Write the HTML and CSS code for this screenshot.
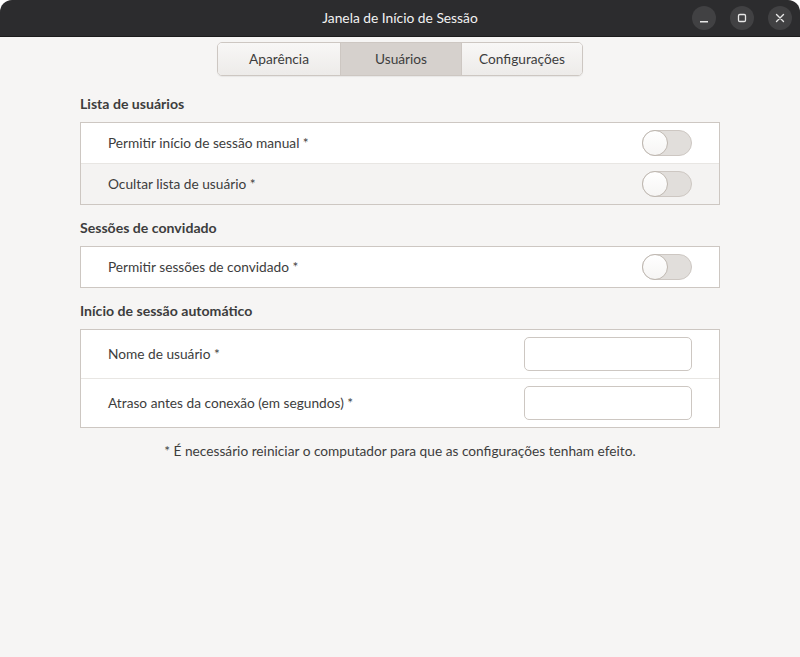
FILE: index.html
```html
<!DOCTYPE html>
<html lang="pt-BR">
<head>
<meta charset="utf-8">
<title>Janela de Início de Sessão</title>
<link rel="stylesheet" href="styles.css">
</head>
<body>
<div class="window">
  <header class="titlebar">
    <div class="title">Janela de Início de Sessão</div>
    <div class="controls">
      <span class="ctl"><svg width="24" height="24" viewBox="0 0 24 24"><rect x="8" y="15" width="8" height="1.5" fill="#e6e6e6"/></svg></span>
      <span class="ctl"><svg width="24" height="24" viewBox="0 0 24 24"><rect x="8.5" y="8.5" width="7" height="7" rx="1.3" fill="none" stroke="#e6e6e6" stroke-width="1.3"/></svg></span>
      <span class="ctl"><svg width="24" height="24" viewBox="0 0 24 24"><path d="M8.5 8.5 L15.5 15.5 M15.5 8.5 L8.5 15.5" stroke="#e6e6e6" stroke-width="1.4" stroke-linecap="round"/></svg></span>
    </div>
  </header>
  <main class="content">
    <nav class="tabs">
      <div class="tab">Aparência</div>
      <div class="tab active">Usuários</div>
      <div class="tab">Configurações</div>
    </nav>

    <h2 class="heading first">Lista de usuários</h2>
    <div class="frame">
      <div class="row">
        <span class="label">Permitir início de sessão manual *</span>
        <span class="switch"><span class="knob"></span></span>
      </div>
      <div class="row alt">
        <span class="label">Ocultar lista de usuário *</span>
        <span class="switch"><span class="knob"></span></span>
      </div>
    </div>

    <h2 class="heading">Sessões de convidado</h2>
    <div class="frame">
      <div class="row">
        <span class="label">Permitir sessões de convidado *</span>
        <span class="switch"><span class="knob"></span></span>
      </div>
    </div>

    <h2 class="heading">Início de sessão automático</h2>
    <div class="frame">
      <div class="row tall">
        <span class="label">Nome de usuário *</span>
        <input class="entry" type="text">
      </div>
      <div class="row tall">
        <span class="label">Atraso antes da conexão (em segundos) *</span>
        <input class="entry" type="text">
      </div>
    </div>

    <p class="note">* É necessário reiniciar o computador para que as configurações tenham efeito.</p>
  </main>
</div>
</body>
</html>
```

FILE: styles.css
```css
* { box-sizing: border-box; }
html, body {
  margin: 0;
  padding: 0;
  background: #ffffff;
}
body {
  font-family: "Lato", "Noto Sans", sans-serif;
  font-size: 13.7px;
  color: #3d3d3d;
}
.window {
  width: 800px;
  height: 657px;
  background: #f6f5f4;
  border-radius: 12px 12px 0 0;
  overflow: hidden;
  display: flex;
  flex-direction: column;
}
.titlebar {
  height: 37px;
  background: #2c2c2e;
  border-bottom: 1px solid #1c1c1c;
  position: relative;
  display: flex;
  align-items: center;
  justify-content: center;
  flex: none;
}
.title {
  color: #f2f2f2;
  font-size: 13.8px;
  padding-bottom: 1px;
}
.controls {
  position: absolute;
  right: 8px;
  top: 6px;
  display: flex;
  gap: 14px;
}
.ctl {
  width: 24px;
  height: 24px;
  border-radius: 50%;
  background: #414143;
  display: block;
}
.ctl svg { display: block; }
.content {
  padding: 0 80px;
  display: flex;
  flex-direction: column;
}
.tabs {
  align-self: center;
  margin-top: 5px;
  display: flex;
  height: 34px;
  border: 1px solid #cdc7c2;
  border-radius: 5px;
  overflow: hidden;
  box-shadow: 0 1px 1px rgba(0,0,0,0.06);
}
.tab {
  display: flex;
  align-items: center;
  justify-content: center;
  height: 100%;
  padding-bottom: 2px;
  background: linear-gradient(#f8f7f6, #edebe9);
  color: #3d3d3d;
}
.tab:nth-child(1) { width: 122px; }
.tab:nth-child(2) { width: 121px; border-left: 1px solid #cdc7c2; }
.tab:nth-child(3) { width: 121px; border-left: 1px solid #cdc7c2; }
.tab.active {
  background: #d6d1cd;
}
.heading {
  margin: 14px 0 10px;
  font-size: 14.1px;
  font-weight: bold;
  line-height: 17px;
  color: #3d3d3d;
}
.heading.first { margin-top: 19px; }
.frame {
  border: 1px solid #cdc7c2;
  background: #ffffff;
}
.row {
  height: 40px;
  display: flex;
  align-items: center;
  justify-content: space-between;
  padding: 0 27px;
}
.row + .row {
  border-top: 1px solid #e8e6e3;
  height: 41px;
}
.row.alt { background: #f4f3f2; }
.row.tall { height: 48px; }
.row.tall + .row.tall { height: 49px; }
.label {
  color: #3d3d3d;
  padding-bottom: 2px;
}
.switch {
  width: 50px;
  height: 26px;
  border-radius: 13px;
  background: #e1dedb;
  border: 1px solid #cdc7c2;
  position: relative;
  display: block;
}
.knob {
  position: absolute;
  left: -1px;
  top: -1px;
  width: 26px;
  height: 26px;
  border-radius: 50%;
  background: linear-gradient(#ffffff, #f6f5f4);
  border: 1px solid #bfb8b1;
}
.entry {
  width: 168px;
  height: 34px;
  border: 1px solid #cdc7c2;
  border-radius: 5px;
  background: #ffffff;
  outline: none;
  margin: 0;
  padding: 0 8px;
  font: inherit;
}
.note {
  margin: 14px 0 0;
  text-align: center;
  line-height: 17px;
  color: #3d3d3d;
}
```
